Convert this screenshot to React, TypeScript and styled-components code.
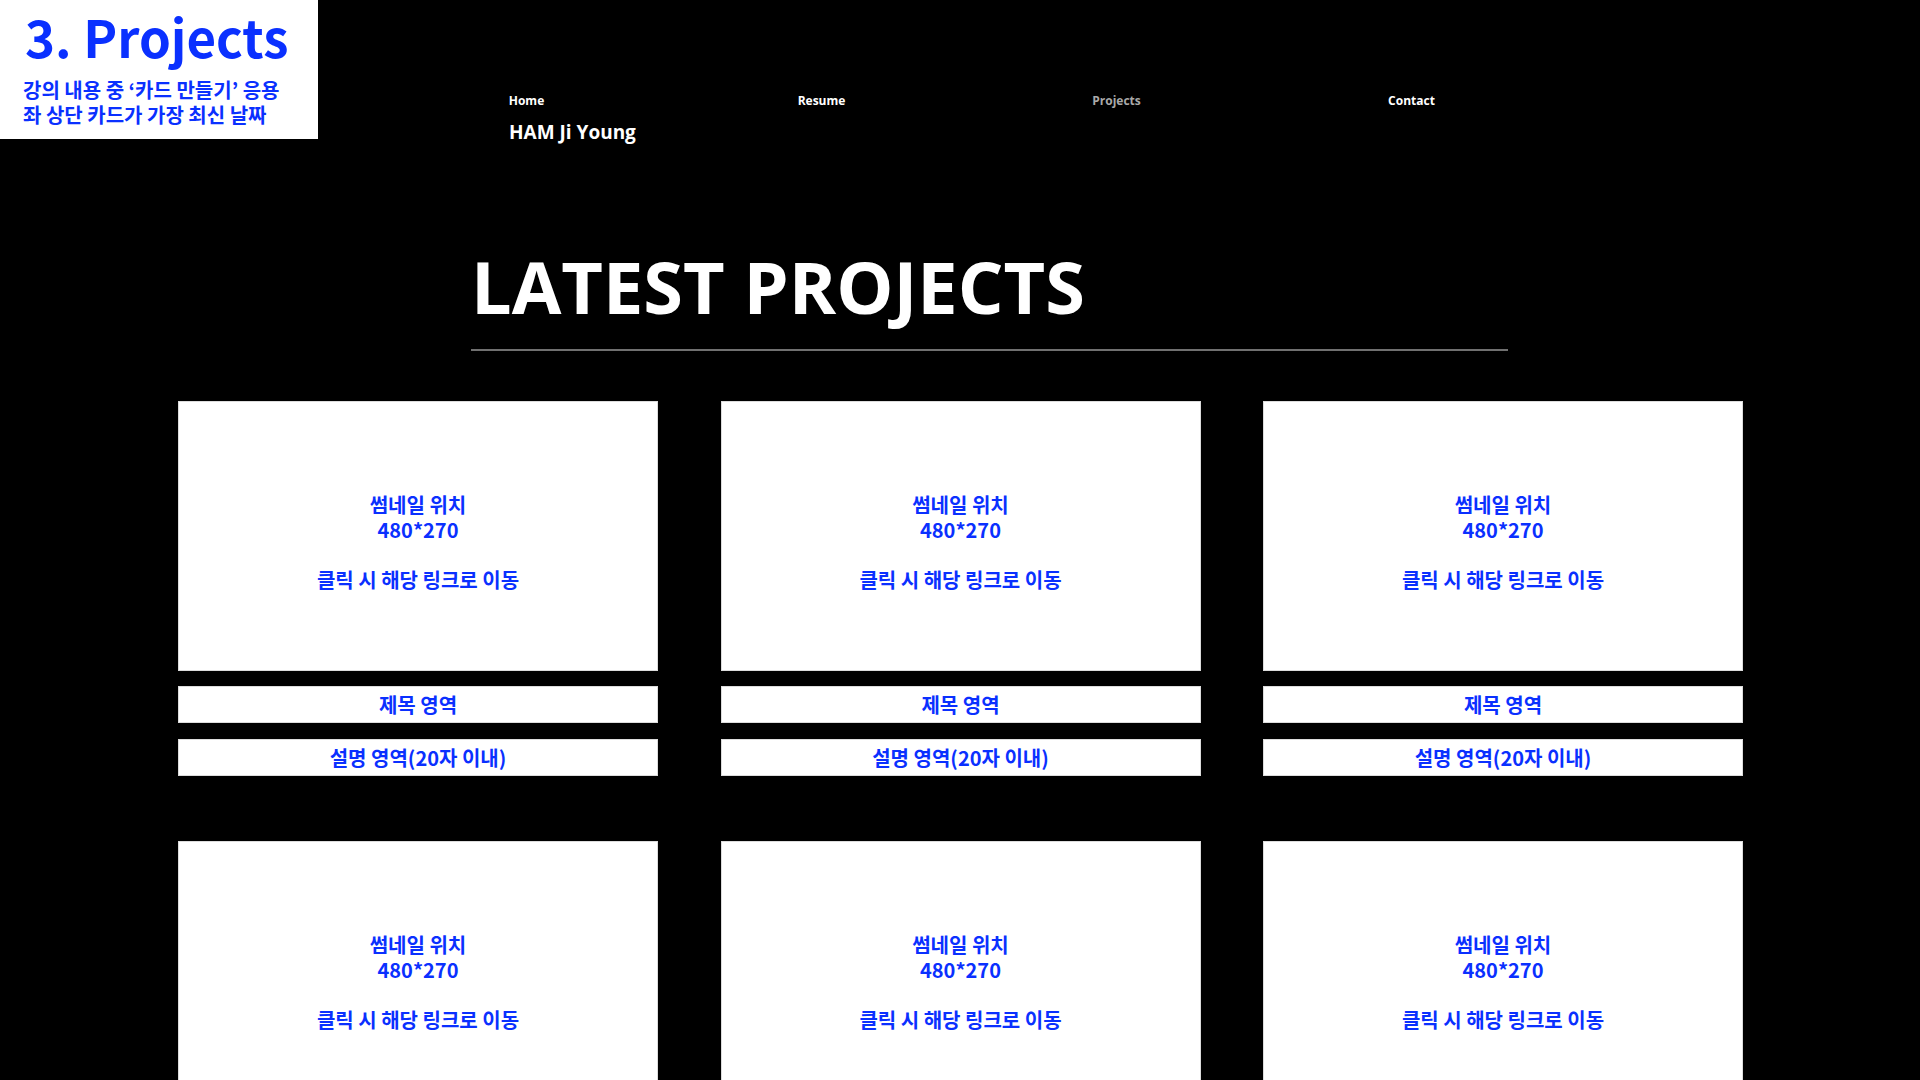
import React from "react";
import styled, { createGlobalStyle } from "styled-components";

const GlobalStyle = createGlobalStyle`
  html, body {
    margin: 0;
    padding: 0;
    background: #000;
  }
  * { box-sizing: border-box; }
`;

const BLUE = "#0a30ff";
const KR = `"Noto Sans CJK KR", "Noto Sans", sans-serif`;
const LATIN = `"Open Sans", "Noto Sans CJK KR", sans-serif`;

const Page = styled.div`
  position: relative;
  min-height: 1080px;
  background: #000;
  padding-bottom: 60px;
`;

const Annotation = styled.div`
  position: absolute;
  top: 0;
  left: 0;
  width: 318px;
  height: 139px;
  background: #fff;
  padding: 4px 0 0 23px;
  font-family: ${KR};
  color: ${BLUE};
`;

const AnnotationTitle = styled.div`
  font-size: 51px;
  font-weight: 700;
  line-height: 64px;
  padding-left: 2px;
`;

const AnnotationText = styled.div`
  margin-top: 9px;
  font-size: 20px;
  font-weight: 700;
  line-height: 25px;
`;

const Header = styled.header`
  padding: 93px 0 0 379px;
  font-family: ${LATIN};
`;

const Nav = styled.nav`
  display: grid;
  grid-template-columns: repeat(4, 295px);
`;

const NavItem = styled.a<{ $active?: boolean }>`
  text-align: center;
  font-size: 12px;
  font-weight: 700;
  line-height: 16px;
  color: ${(p) => (p.$active ? "#a9a9a9" : "#fff")};
  text-decoration: none;
`;

const Brand = styled.div`
  margin: 10px 0 0 130px;
  font-size: 19px;
  font-weight: 700;
  line-height: 26px;
  color: #fff;
`;

const Section = styled.section`
  margin: 97px 0 0 471px;
  width: 1037px;
`;

const Title = styled.h1`
  margin: 0;
  font-family: ${LATIN};
  font-size: 72px;
  font-weight: 700;
  line-height: 89px;
  color: #fff;
`;

const Divider = styled.hr`
  margin: 18px 0 0;
  border: 0;
  height: 2px;
  background: #707070;
`;

const Grid = styled.div`
  display: grid;
  grid-template-columns: repeat(3, 480px);
  column-gap: 62.5px;
  row-gap: 65px;
  margin: 50px 0 0 178px;
`;

const Card = styled.a`
  display: flex;
  flex-direction: column;
  text-decoration: none;
  font-family: ${KR};
  font-weight: 700;
  color: ${BLUE};
`;

const Thumb = styled.div`
  height: 270px;
  background: #fff;
  border: 1px solid #dcdcdc;
  padding-top: 90px;
  text-align: center;
  font-size: 20px;
  line-height: 25px;
`;

const Field = styled.div<{ $gap: number }>`
  height: 37px;
  margin-top: ${(p) => p.$gap}px;
  background: #fff;
  border: 1px solid #dcdcdc;
  display: flex;
  align-items: center;
  justify-content: center;
  font-size: 20px;
  line-height: 25px;
`;

const cards = Array.from({ length: 6 }, (_, i) => i);

export default function App() {
  return (
    <>
      <GlobalStyle />
      <Page>
        <Header>
          <Nav>
            <NavItem href="#">Home</NavItem>
            <NavItem href="#">Resume</NavItem>
            <NavItem href="#" $active>
              Projects
            </NavItem>
            <NavItem href="#">Contact</NavItem>
          </Nav>
          <Brand>HAM Ji Young</Brand>
        </Header>
        <Section>
          <Title>LATEST PROJECTS</Title>
          <Divider />
        </Section>
        <Grid>
          {cards.map((i) => (
            <Card href="#" key={i}>
              <Thumb>
                썸네일 위치
                <br />
                480*270
                <br />
                <br />
                클릭 시 해당 링크로 이동
              </Thumb>
              <Field $gap={15}>제목 영역</Field>
              <Field $gap={16}>설명 영역(20자 이내)</Field>
            </Card>
          ))}
        </Grid>
        <Annotation>
          <AnnotationTitle>3. Projects</AnnotationTitle>
          <AnnotationText>
            강의 내용 중 ‘카드 만들기’ 응용
            <br />
            좌 상단 카드가 가장 최신 날짜
          </AnnotationText>
        </Annotation>
      </Page>
    </>
  );
}
